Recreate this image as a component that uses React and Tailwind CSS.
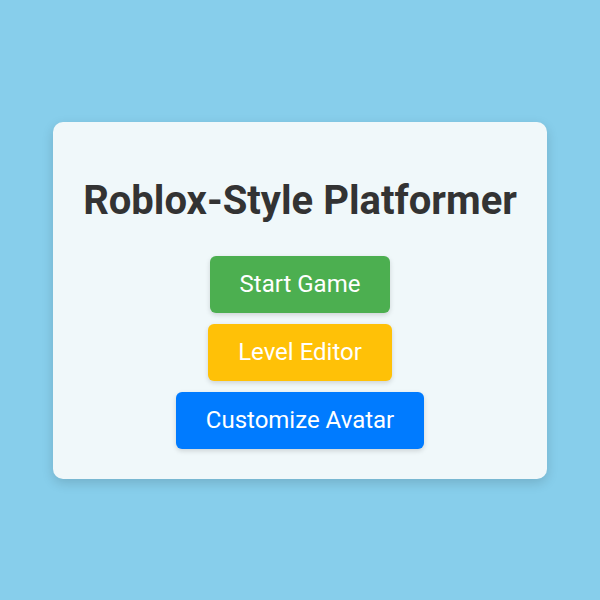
import React from 'react';

const buttons = [
    { label: 'Start Game', className: 'bg-[#4caf50]' },
    { label: 'Level Editor', className: 'bg-[#ffc107]' },
    { label: 'Customize Avatar', className: 'bg-[#007bff]' },
];

const App = () => {
    return (
        <div className="min-h-screen w-full flex items-center justify-center bg-[#87ceeb] font-['Roboto',sans-serif]">
            <div className="w-[494px] h-[357px] bg-[#f0f8fa] rounded-[10px] shadow-[0_4px_12px_rgba(0,0,0,0.15)] flex flex-col items-center pt-[55px]">
                <h1 className="text-[40px] leading-[47px] font-bold text-[#333333] mb-[32px]">Roblox-Style Platformer</h1>
                <div className="flex flex-col items-center gap-[11px]">
                    {buttons.map((b) => (
                        <button
                            key={b.label}
                            className={`${b.className} text-white text-[24px] leading-[27px] px-[30px] py-[15px] rounded-[6px] shadow-[0_2px_5px_rgba(0,0,0,0.15)]`}
                        >
                            {b.label}
                        </button>
                    ))}
                </div>
            </div>
        </div>
    );
};

export default App;
